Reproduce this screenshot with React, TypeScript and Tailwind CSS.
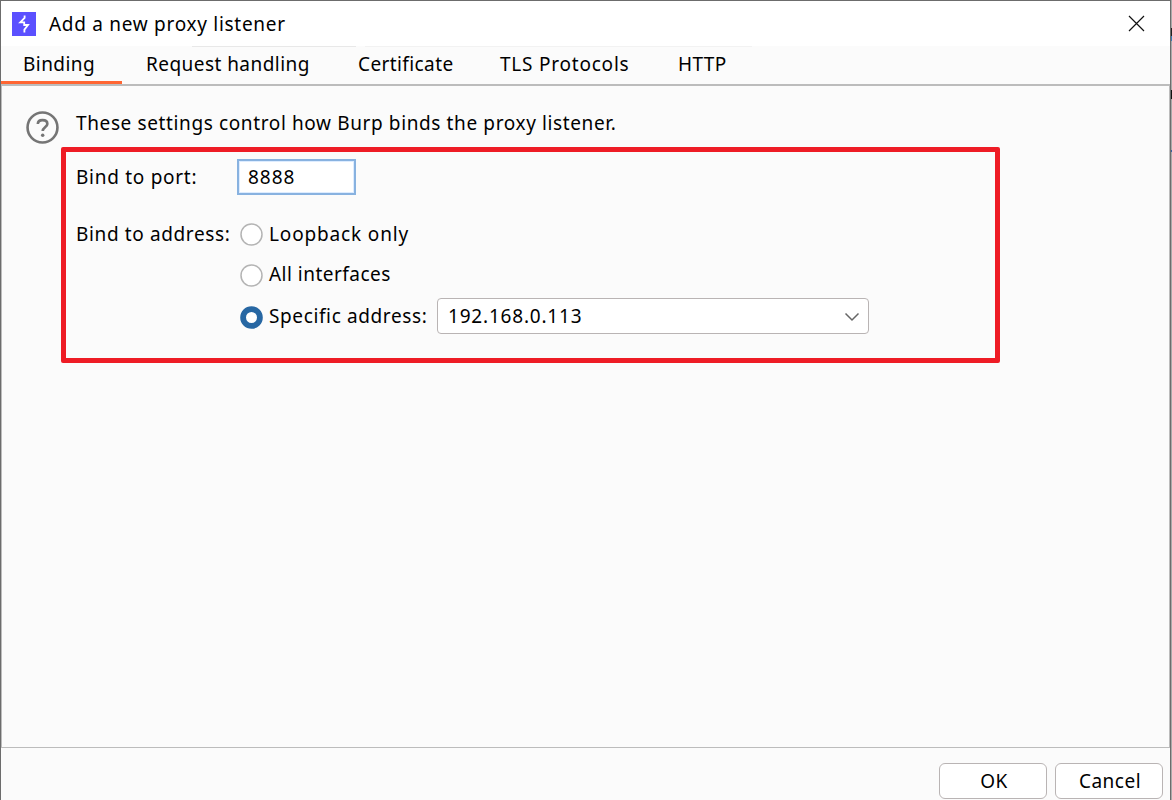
import React from "react";

const tabs = [
  { label: "Binding", cls: "w-[73px] tracking-[0.45px]" },
  { label: "Request handling", cls: "w-[164px] tracking-[0.45px]" },
  { label: "Certificate", cls: "w-[94px] tracking-[0.4px]" },
  { label: "TLS Protocols", cls: "w-[130px] tracking-[0.78px]" },
  { label: "HTTP", cls: "w-[50px] tracking-[0.4px]" },
];

function Logo() {
  return (
    <svg width="24" height="24" viewBox="0 0 24 24" className="shrink-0">
      <rect width="24" height="24" fill="#5b50ff" />
      <path d="M12.6 3.6V6L8.3 10.3H12.2V13H16L12.4 17.6V20.6" fill="none" stroke="#fff" strokeWidth="1.8" />
    </svg>
  );
}

function Radio({ checked = false }: { checked?: boolean }) {
  return (
    <svg width="23" height="23" viewBox="0 0 23 23" className="shrink-0">
      {checked ? (
        <circle cx="11.5" cy="11.5" r="8.4" fill="#fff" stroke="#2767a3" strokeWidth="5.8" />
      ) : (
        <circle cx="11.5" cy="11.5" r="10.5" fill="#fff" stroke="#b4b4b4" strokeWidth="1.5" />
      )}
    </svg>
  );
}

export default function App() {
  return (
    <div className="flex h-[800px] w-[1172px] overflow-hidden bg-[#a9a9a9] font-['Noto_Sans','Open_Sans',sans-serif] text-[19px] leading-[26px] whitespace-nowrap text-black">
      <div className="relative flex h-[800px] w-[1171px] shrink-0 flex-col border-t border-r border-l border-[#6c6c6c] bg-[#fbfbfb]">
        <header className="flex h-[45px] shrink-0 items-center bg-white pl-[11px]">
          <Logo />
          <h1 className="ml-[13px] pt-px tracking-[0.71px]">Add a new proxy listener</h1>
          <svg width="17" height="17" viewBox="0 0 17 17" className="mr-[25px] ml-auto">
            <path d="M1 1L16 16M16 1L1 16" stroke="#111" strokeWidth="1.2" />
          </svg>
        </header>
        <nav className="flex h-[38px] shrink-0">
          {tabs.map((tab, i) => (
            <div
              key={tab.label}
              className={
                i === 0
                  ? "flex w-[121px] justify-start border-b-[3px] border-[#ff6633] pt-[5px] pl-[22px]"
                  : "flex justify-start pt-[5px] pr-[24px] pl-[24px]"
              }
            >
              <span className={tab.cls}>{tab.label}</span>
            </div>
          ))}
        </nav>
        <main className="h-[664px] shrink-0 border-t-2 border-r border-b border-l border-[#bcbcbc] pt-[25px]">
          <div className="flex h-[38px] pl-6">
            <svg width="33" height="33" viewBox="0 0 34 34" className="shrink-0">
              <circle cx="17" cy="17" r="15.4" fill="none" stroke="#757575" strokeWidth="2.7" />
              <path d="M12.2 13.5C12.2 10.8 14.2 9.4 17 9.4C20 9.4 22 11 22 13.3C22 16.2 17.2 16.8 17.2 20.7" fill="none" stroke="#757575" strokeWidth="2.7" />
              <circle cx="17.2" cy="25" r="1.8" fill="#757575" />
            </svg>
            <p className="-mt-px ml-[17px] tracking-[0.62px]">These settings control how Burp binds the proxy listener.</p>
          </div>
          <div className="mt-[10px] flex h-9 items-center pl-[74px]">
            <label className="w-[161px] tracking-[0.72px]">Bind to port:</label>
            <div className="flex h-9 w-[119px] items-center border-2 border-[#88b2e0] bg-white pl-[9px] tracking-[0.95px] shadow-[inset_0_0_0_1px_#ddecff]">8888</div>
          </div>
          <div className="mt-[26px] flex pl-[74px]">
            <label className="w-[164px] tracking-[0.63px]">Bind to address:</label>
            <div>
              <div className="flex h-[26px] items-center gap-[6px]">
                <Radio />
                <span className="tracking-[0.85px]">Loopback only</span>
              </div>
              <div className="mt-[14px] flex h-[26px] items-center gap-[6px]">
                <span className="flex pt-[2px]"><Radio /></span>
                <span className="tracking-[0.48px]">All interfaces</span>
              </div>
              <div className="mt-[11px] flex h-9 items-center gap-[6px]">
                <span className="flex pt-[2px]"><Radio checked /></span>
                <span className="w-[162px] tracking-[0.62px]">Specific address:</span>
                <div className="flex h-9 w-[432px] items-center justify-between rounded-[4px] border-[1.5px] border-[#b9b4b4] bg-white pr-[8px] pl-[10px]">
                  <span className="tracking-[0.8px]">192.168.0.113</span>
                  <svg width="16" height="10" viewBox="0 0 16 10" className="mt-px">
                    <path d="M1.5 1.5L8 8L14.5 1.5" fill="none" stroke="#666" strokeWidth="1.5" />
                  </svg>
                </div>
              </div>
            </div>
          </div>
        </main>
        <footer className="flex justify-end gap-2 pt-[15px] pr-[7px]">
          <button className="flex h-9 w-[108px] items-center justify-center rounded-[6px] border-[1.5px] border-[#b9b4b4] bg-white pl-[2px] tracking-[0.5px]">OK</button>
          <button className="flex h-9 w-[108px] items-center justify-center rounded-[6px] border-[1.5px] border-[#b9b4b4] bg-white pl-[2px] tracking-[0.5px]">Cancel</button>
        </footer>
        <div className="absolute top-[45px] left-[191px] h-px w-[164px] bg-[#e8e8e8]" />
        <div className="absolute top-[45px] left-[364px] h-px w-[387px] bg-[#f2f2f2]" />
        <div className="absolute top-[146px] left-[60px] h-[216px] w-[939px] rounded-[2px] border-[5px] border-[#ee1c25]" />
      </div>
      <div className="flex w-px flex-col">
        <div className="mt-[28px] h-[8px] bg-[#222]" />
        <div className="h-[5px] bg-[#3978b5]" />
        <div className="mt-[49px] h-[9px] bg-[#111]" />
        <div className="mt-[51px] h-[2px] bg-[#3860a0]" />
      </div>
    </div>
  );
}
